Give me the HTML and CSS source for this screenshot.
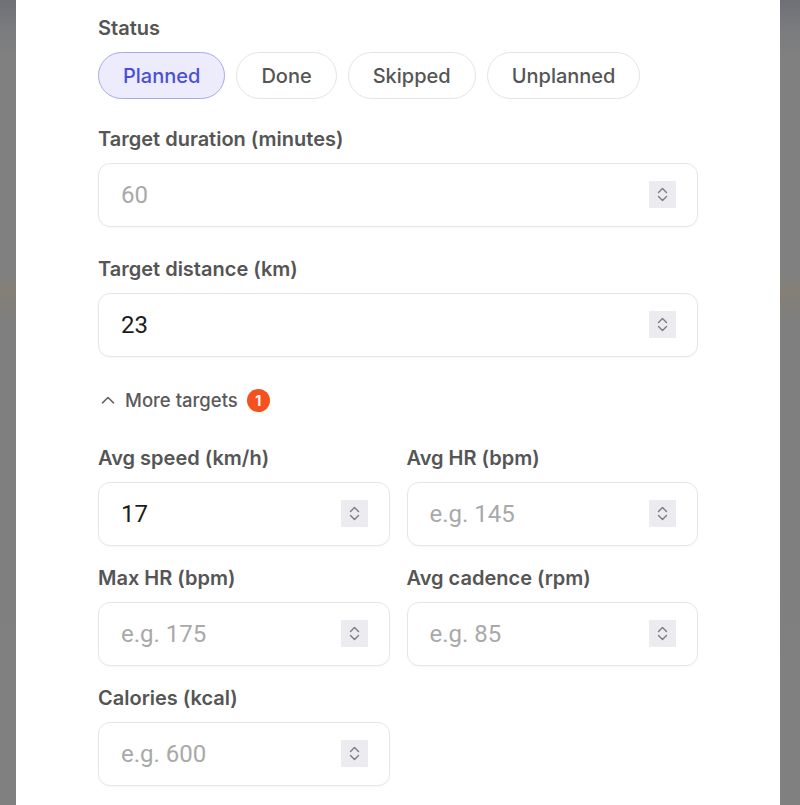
FILE: index.html
```html
<!DOCTYPE html>
<html lang="en">
<head>
  <meta charset="UTF-8">
  <meta name="viewport" content="width=device-width, initial-scale=1.0">
  <title>Edit workout</title>
  <link rel="stylesheet" href="styles.css">
</head>
<body>
  <div class="backdrop">
    <div class="modal">
      <form class="form">
        <div class="field status">
          <div class="label">Status</div>
          <div class="pills">
            <button type="button" class="pill active">Planned</button>
            <button type="button" class="pill">Done</button>
            <button type="button" class="pill">Skipped</button>
            <button type="button" class="pill">Unplanned</button>
          </div>
        </div>

        <div class="field">
          <label class="label" for="duration">Target duration (minutes)</label>
          <div class="num">
            <input type="number" id="duration" placeholder="60">
            <span class="spin"><svg viewBox="0 0 27 27" width="27" height="27"><path d="M9.5 11.5l4-4 4 4M9.5 15.5l4 4 4-4" fill="none" stroke="#7a7a80" stroke-width="1.4" stroke-linecap="round" stroke-linejoin="round"/></svg></span>
          </div>
        </div>

        <div class="field">
          <label class="label" for="distance">Target distance (km)</label>
          <div class="num">
            <input type="number" id="distance" value="23">
            <span class="spin"><svg viewBox="0 0 27 27" width="27" height="27"><path d="M9.5 11.5l4-4 4 4M9.5 15.5l4 4 4-4" fill="none" stroke="#7a7a80" stroke-width="1.4" stroke-linecap="round" stroke-linejoin="round"/></svg></span>
          </div>
        </div>

        <button type="button" class="more">
          <svg viewBox="0 0 14 8" width="14" height="8"><path d="M1.5 6.8L7 1.5l5.5 5.3" fill="none" stroke="#666" stroke-width="1.6" stroke-linecap="round" stroke-linejoin="round"/></svg>
          <span>More targets</span>
          <span class="badge">1</span>
        </button>

        <div class="grid">
          <div class="cell">
            <label class="label" for="speed">Avg speed (km/h)</label>
            <div class="num">
              <input type="number" id="speed" value="17">
              <span class="spin"><svg viewBox="0 0 27 27" width="27" height="27"><path d="M9.5 11.5l4-4 4 4M9.5 15.5l4 4 4-4" fill="none" stroke="#7a7a80" stroke-width="1.4" stroke-linecap="round" stroke-linejoin="round"/></svg></span>
            </div>
          </div>
          <div class="cell">
            <label class="label" for="hr">Avg HR (bpm)</label>
            <div class="num">
              <input type="number" id="hr" placeholder="e.g. 145">
              <span class="spin"><svg viewBox="0 0 27 27" width="27" height="27"><path d="M9.5 11.5l4-4 4 4M9.5 15.5l4 4 4-4" fill="none" stroke="#7a7a80" stroke-width="1.4" stroke-linecap="round" stroke-linejoin="round"/></svg></span>
            </div>
          </div>
          <div class="cell">
            <label class="label" for="maxhr">Max HR (bpm)</label>
            <div class="num">
              <input type="number" id="maxhr" placeholder="e.g. 175">
              <span class="spin"><svg viewBox="0 0 27 27" width="27" height="27"><path d="M9.5 11.5l4-4 4 4M9.5 15.5l4 4 4-4" fill="none" stroke="#7a7a80" stroke-width="1.4" stroke-linecap="round" stroke-linejoin="round"/></svg></span>
            </div>
          </div>
          <div class="cell">
            <label class="label" for="cadence">Avg cadence (rpm)</label>
            <div class="num">
              <input type="number" id="cadence" placeholder="e.g. 85">
              <span class="spin"><svg viewBox="0 0 27 27" width="27" height="27"><path d="M9.5 11.5l4-4 4 4M9.5 15.5l4 4 4-4" fill="none" stroke="#7a7a80" stroke-width="1.4" stroke-linecap="round" stroke-linejoin="round"/></svg></span>
            </div>
          </div>
          <div class="cell">
            <label class="label" for="kcal">Calories (kcal)</label>
            <div class="num">
              <input type="number" id="kcal" placeholder="e.g. 600">
              <span class="spin"><svg viewBox="0 0 27 27" width="27" height="27"><path d="M9.5 11.5l4-4 4 4M9.5 15.5l4 4 4-4" fill="none" stroke="#7a7a80" stroke-width="1.4" stroke-linecap="round" stroke-linejoin="round"/></svg></span>
            </div>
          </div>
        </div>
      </form>
    </div>
  </div>
</body>
</html>
```

FILE: styles.css
```css
html, body {
  margin: 0;
  height: 805px;
  overflow: hidden;
}
body {
  background:
    linear-gradient(180deg, #6e7076 0, #7b7c7f 30px, #808080 60px, #808080 275px, #857f76 290px, #7f7f7f 320px, #808080 100%);
  font-family: 'Inter', 'Noto Sans', sans-serif;
}
.backdrop {
  display: flex;
  padding-left: 16px;
}
.modal {
  background: #fff;
  width: 764px;
  min-height: 805px;
  box-sizing: border-box;
  padding: 14px 82px 0 82px;
}
.form {
  display: flex;
  flex-direction: column;
}
.field {
  margin-bottom: 28px;
}
.field.status {
  margin-bottom: 26px;
}
.label {
  display: block;
  font-size: 20px;
  line-height: 28px;
  font-weight: 600;
  color: #555;
  margin-bottom: 10px;
}
.pills {
  display: flex;
  gap: 11px;
  margin-top: 7px;
}
.pill {
  height: 47px;
  padding: 0 24px;
  border-radius: 999px;
  border: 1px solid #e4e4e7;
  background: #fff;
  font-family: inherit;
  font-size: 20px;
  font-weight: 500;
  color: #555;
  cursor: pointer;
}
.pill.active {
  background: #ececfc;
  border-color: #a6a9ee;
  color: #4b4fd6;
}
.num {
  position: relative;
}
.num input {
  width: 100%;
  height: 64px;
  box-sizing: border-box;
  border: 1px solid #e6e6e6;
  border-radius: 12px;
  padding: 0 60px 0 22px;
  font-family: 'Roboto', sans-serif;
  font-size: 24px;
  color: #1c1c1c;
  background: #fff;
  outline: none;
  -moz-appearance: textfield;
  box-shadow: 0 1px 2px rgba(0,0,0,0.03);
}
.num input::placeholder {
  color: #a9a9a9;
}
.num input::-webkit-inner-spin-button,
.num input::-webkit-outer-spin-button {
  -webkit-appearance: none;
  margin: 0;
}
.spin {
  position: absolute;
  right: 22px;
  top: 18px;
  width: 27px;
  height: 27px;
  background: #ececf0;
  display: flex;
}
.more {
  display: flex;
  align-items: center;
  background: none;
  border: none;
  padding: 0 0 0 3px;
  margin: 3px 0 32px 0;
  height: 24px;
  font-family: inherit;
  font-size: 18.5px;
  font-weight: 500;
  color: #5a5a5a;
  cursor: pointer;
  align-self: flex-start;
}
.more svg {
  margin-right: 10px;
}
.badge {
  width: 23px;
  height: 23px;
  border-radius: 50%;
  background: #f4511e;
  color: #fff;
  font-size: 14px;
  font-weight: 700;
  display: flex;
  align-items: center;
  justify-content: center;
  margin-left: 9px;
}
.grid {
  display: grid;
  grid-template-columns: 1fr 1fr;
  column-gap: 17px;
  row-gap: 18px;
}
```
